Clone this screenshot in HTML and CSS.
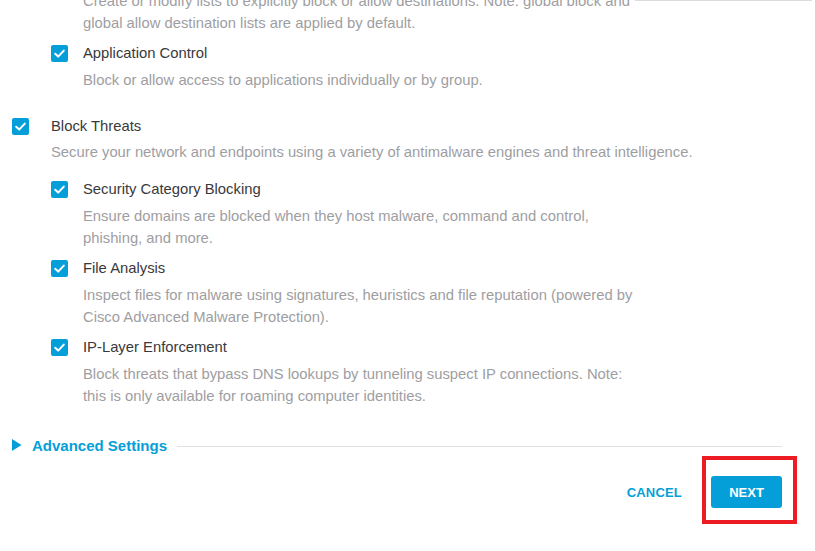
FILE: index.html
```html
<!DOCTYPE html>
<html>
<head>
<meta charset="utf-8">
<link rel="stylesheet" href="styles.css">
</head>
<body>
<div class="edge-line"></div>
<main class="panel">
  <div class="nested first">
    <div class="item">
      <span class="spacer"></span>
      <div class="body">
        <p class="desc">Create or modify lists to explicitly block or allow destinations. Note: global block and<br>global allow destination lists are applied by default.</p>
      </div>
    </div>
    <div class="item">
      <span class="check"><svg viewBox="0 0 17 17"><path d="M4.2 8.8 L7.2 11.6 L12.8 5.6" /></svg></span>
      <div class="body">
        <div class="title">Application Control</div>
        <p class="desc">Block or allow access to applications individually or by group.</p>
      </div>
    </div>
  </div>

  <div class="top-item">
    <span class="check"><svg viewBox="0 0 17 17"><path d="M4.2 8.8 L7.2 11.6 L12.8 5.6" /></svg></span>
    <div class="body">
      <div class="title">Block Threats</div>
      <p class="desc">Secure your network and endpoints using a variety of antimalware engines and threat intelligence.</p>
      <div class="nested">
        <div class="item">
          <span class="check"><svg viewBox="0 0 17 17"><path d="M4.2 8.8 L7.2 11.6 L12.8 5.6" /></svg></span>
          <div class="body">
            <div class="title">Security Category Blocking</div>
            <p class="desc">Ensure domains are blocked when they host malware, command and control,<br>phishing, and more.</p>
          </div>
        </div>
        <div class="item">
          <span class="check"><svg viewBox="0 0 17 17"><path d="M4.2 8.8 L7.2 11.6 L12.8 5.6" /></svg></span>
          <div class="body">
            <div class="title">File Analysis</div>
            <p class="desc">Inspect files for malware using signatures, heuristics and file reputation (powered by<br>Cisco Advanced Malware Protection).</p>
          </div>
        </div>
        <div class="item">
          <span class="check"><svg viewBox="0 0 17 17"><path d="M4.2 8.8 L7.2 11.6 L12.8 5.6" /></svg></span>
          <div class="body">
            <div class="title">IP-Layer Enforcement</div>
            <p class="desc">Block threats that bypass DNS lookups by tunneling suspect IP connections. Note:<br>this is only available for roaming computer identities.</p>
          </div>
        </div>
      </div>
    </div>
  </div>

  <div class="advanced">
    <svg class="caret" viewBox="0 0 10 12"><path d="M0 0 L9.5 6 L0 12 Z"/></svg>
    <span class="adv-label">Advanced Settings</span>
    <span class="rule"></span>
  </div>

  <div class="footer">
    <button class="btn-link">CANCEL</button>
    <button class="btn-primary">NEXT</button>
  </div>
</main>
</body>
</html>
```

FILE: styles.css
```css
html, body {
  margin: 0;
  padding: 0;
  background: #ffffff;
  overflow: hidden;
}
body {
  font-family: "Liberation Sans", Arial, sans-serif;
  font-size: 14.8px;
  color: #39393b;
  width: 815px;
  height: 551px;
  position: relative;
}
.edge-line {
  position: absolute;
  top: 0;
  left: 635px;
  width: 177px;
  height: 1px;
  background: #dcdcde;
}
.panel {
  display: flex;
  flex-direction: column;
  padding: 0 33px 0 12px;
  margin-top: -10px;
}
.nested {
  display: flex;
  flex-direction: column;
  gap: 8px;
}
.nested.first {
  padding-left: 39px;
}
.item {
  display: grid;
  grid-template-columns: 32px 1fr;
}
.top-item {
  display: grid;
  grid-template-columns: 39px 1fr;
  margin-top: 24px;
}
.top-item > .body > .desc {
  margin-top: 4px;
}
.top-item > .body > .nested {
  margin-top: 15px;
}
.spacer {
  display: block;
}
.check {
  display: block;
  width: 17px;
  height: 17px;
  margin-top: 3px;
  background: #049fd9;
  border-radius: 2px;
}
.check svg {
  display: block;
  width: 17px;
  height: 17px;
}
.check path {
  fill: none;
  stroke: #ffffff;
  stroke-width: 2;
  stroke-linecap: round;
  stroke-linejoin: round;
}
.title {
  line-height: 22px;
  color: #39393b;
}
.desc {
  margin: 5px 0 0 0;
  line-height: 22px;
  color: #9e9ea2;
}
.spacer + .body .desc {
  margin-top: 0;
}
.advanced {
  display: flex;
  align-items: center;
  margin-top: 27px;
  height: 22px;
}
.caret {
  width: 10px;
  height: 12px;
  fill: #049fd9;
  margin-right: 10px;
}
.adv-label {
  font-weight: bold;
  font-size: 15px;
  color: #049fd9;
}
.rule {
  flex: 1;
  height: 1px;
  background: #e1e1e3;
  margin-left: 10px;
  margin-top: 2px;
}
.footer {
  display: flex;
  justify-content: flex-end;
  align-items: center;
  gap: 29px;
  margin-top: 20px;
}
.btn-link {
  border: 0;
  background: none;
  padding: 0;
  font-family: inherit;
  font-weight: bold;
  font-size: 13px;
  color: #049fd9;
  letter-spacing: 0.2px;
}
.btn-primary {
  position: relative;
  width: 71px;
  height: 32px;
  border: 0;
  border-radius: 3px;
  background: #049fd9;
  color: #ffffff;
  font-family: inherit;
  font-weight: bold;
  font-size: 13px;
}
.btn-primary::after {
  content: "";
  position: absolute;
  left: -9px;
  right: -15px;
  top: -20px;
  bottom: -16px;
  border: 4px solid #ed1c24;
}
```
